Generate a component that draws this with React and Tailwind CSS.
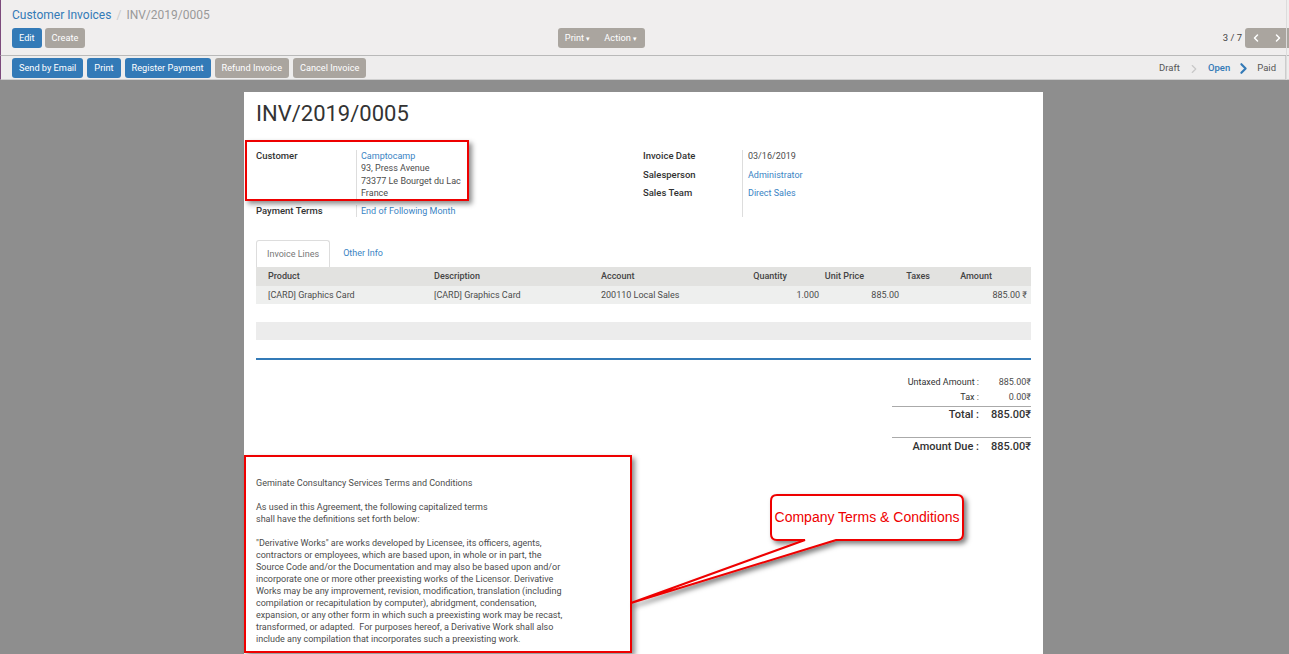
import { ChevronLeft, ChevronRight } from "lucide-react";

const blueBtn = "h-[20px] px-[7px] rounded-[3px] bg-[#337ab7] text-white text-[9.2px] leading-[20px]";
const grayBtn = "h-[20px] px-[7px] rounded-[3px] bg-[#aaa59f] text-white text-[9.2px] leading-[20px]";

function Field({ label, children }) {
  return (
    <div className="flex">
      <div className="w-[100px] shrink-0 font-medium text-[#333] text-[9.5px]">{label}</div>
      <div className="border-l border-[#ddd] pl-[4px] flex-1">{children}</div>
    </div>
  );
}

const lines = [
  { product: "[CARD] Graphics Card", desc: "[CARD] Graphics Card", account: "200110 Local Sales", qty: "1.000", price: "885.00", amount: "885.00 ₹" },
];

export default function App() {
  return (
    <div className="relative w-[1289px] h-[654px] overflow-hidden bg-[#8e8e8e] text-[#4c4c4c]" style={{ fontFamily: "Roboto, 'Noto Sans', sans-serif" }}>
      {/* control panel */}
      <div className="bg-[#f0eeee] border-l border-[#7c4a7c] border-b border-b-[#b9b9b9] h-[56px] pl-[11px] pt-[6px]">
        <div className="text-[12px] leading-[18px]">
          <span className="text-[#337ab7]">Customer Invoices</span>
          <span className="text-[#ccc] mx-[5px]">/</span>
          <span className="text-[#999]">INV/2019/0005</span>
        </div>
        <div className="flex mt-[4px]">
          <div className="w-[633px] flex justify-between">
            <div className="flex gap-[3px]">
              <button className={blueBtn}>Edit</button>
              <button className={grayBtn}>Create</button>
            </div>
            <div className="flex rounded-[3px] bg-[#aaa59f] h-[20px] text-white text-[9.2px] leading-[20px]">
              <span className="pl-[7px] pr-[6px]">Print <span className="text-[7px]">▾</span></span>
              <span className="pl-[8px] pr-[8px]">Action <span className="text-[7px]">▾</span></span>
            </div>
          </div>
          <div className="flex-1 flex justify-end items-center">
            <span className="text-[9.5px] mr-[3px] text-[#444]">3 / 7</span>
            <div className="flex h-[20px] w-[44px] rounded-l-[3px] bg-[#aaa59f] text-white items-center justify-around">
              <ChevronLeft size={12} strokeWidth={3} />
              <ChevronRight size={12} strokeWidth={3} />
            </div>
          </div>
        </div>
      </div>

      {/* status bar */}
      <div className="bg-[#eeeded] border-l border-[#7c4a7c] border-b border-b-[#d0d0d0] h-[24px] pl-[11px] flex items-center justify-between">
        <div className="flex gap-[4px]">
          <button className={blueBtn}>Send by Email</button>
          <button className={blueBtn}>Print</button>
          <button className={blueBtn}>Register Payment</button>
          <button className={grayBtn}>Refund Invoice</button>
          <button className={grayBtn}>Cancel Invoice</button>
        </div>
        <div className="flex items-center h-full text-[9.5px] border-r border-[#ccc] mr-[3px] pt-[2px]">
          <span className="text-[#555]">Draft</span>
          <ChevronRight size={14} strokeWidth={2} className="text-[#c8c8c8] mx-[7px]" />
          <span className="text-[#337ab7] font-medium">Open</span>
          <ChevronRight size={17} strokeWidth={3} className="text-[#337ab7] mx-[5px]" />
          <span className="text-[#555] mr-[9px]">Paid</span>
        </div>
      </div>

      {/* sheet */}
      <div className="pt-[12px] pr-[2px] flex justify-center">
        <div className="w-[799px] bg-white px-[12px] pt-[8px] text-[9px] leading-[12.3px] h-[600px]">
          <div className="text-[22px] leading-[28px] text-[#333] mb-[22px]">INV/2019/0005</div>
          <div className="flex">
            <div className="w-[387px] flex flex-col gap-[6px]">
              <Field label="Customer">
                <div className="text-[#3a84c4]">Camptocamp</div>
                <div>93, Press Avenue</div>
                <div>73377 Le Bourget du Lac</div>
                <div>France</div>
              </Field>
              <Field label="Payment Terms">
                <div className="text-[#3a84c4]">End of Following Month</div>
              </Field>
            </div>
            <div className="flex-1 flex">
              <div className="w-[99px] font-medium text-[9.5px] text-[#333] flex flex-col gap-[7px]">
                <div>Invoice Date</div>
                <div>Salesperson</div>
                <div className="-mt-[2px]">Sales Team</div>
              </div>
              <div className="border-l border-[#ddd] pl-[5px] flex flex-col gap-[7px] pb-[2px]">
                <div>03/16/2019</div>
                <div className="text-[#3a84c4]">Administrator</div>
                <div className="text-[#3a84c4] -mt-[2px]">Direct Sales</div>
              </div>
            </div>
          </div>

          {/* tabs */}
          <div className="mt-[23px] flex text-[9px]">
            <div className="border border-[#ddd] border-b-0 rounded-t-[3px] px-[10px] h-[27px] leading-[26px] text-[#777]">Invoice Lines</div>
            <div className="px-[13px] h-[27px] leading-[26px] text-[#3a84c4]">Other Info</div>
          </div>
          <div className="text-[9px]">
            <div className="grid grid-cols-[178px_167px_112px_74px_77px_66px_62px_39px] bg-[#e2e2e0] h-[19px] leading-[19px] font-medium text-[#444]">
              <div className="pl-[12px]">Product</div>
              <div>Description</div>
              <div>Account</div>
              <div className="text-right">Quantity</div>
              <div className="text-right">Unit Price</div>
              <div className="text-right">Taxes</div>
              <div className="text-right">Amount</div>
              <div></div>
            </div>
            {lines.map((l, i) => (
              <div key={i} className="grid grid-cols-[178px_167px_112px_106px_80px_132px] bg-[#eeefee] h-[18px] leading-[18px]">
                <div className="pl-[12px]">{l.product}</div>
                <div>{l.desc}</div>
                <div>{l.account}</div>
                <div className="text-right">{l.qty}</div>
                <div className="text-right">{l.price}</div>
                <div className="text-right pr-[4px]">{l.amount}</div>
              </div>
            ))}
            <div className="h-[18px]"></div>
            <div className="h-[18px] bg-[#ececec]"></div>
          </div>
          <div className="mt-[18px] h-[2px] bg-[#337ab7]"></div>

          {/* totals */}
          <div className="flex justify-end mt-[15px]">
            <div className="w-[139px] text-[9px]">
              <div className="flex justify-end h-[15px] leading-[15px]">
                <span className="text-[#333]">Untaxed Amount :</span>
                <span className="w-[52px] text-right">885.00₹</span>
              </div>
              <div className="flex justify-end h-[15px] leading-[15px]">
                <span className="text-[#333]">Tax :</span>
                <span className="w-[52px] text-right">0.00₹</span>
              </div>
              <div className="border-t border-[#aaa] mt-[1px] flex justify-end h-[16px] leading-[15px] text-[11px] font-medium text-[#333]">
                <span>Total :</span>
                <span className="w-[52px] text-right">885.00₹</span>
              </div>
              <div className="border-t border-[#aaa] mt-[15px] pt-[1px] flex justify-end h-[16px] leading-[15px] text-[11px] font-medium text-[#333]">
                <span>Amount Due :</span>
                <span className="w-[52px] text-right">885.00₹</span>
              </div>
            </div>
          </div>

          {/* terms */}
          <div className="mt-[24px] text-[9px] leading-[12px] text-[#4c4c4c] whitespace-nowrap">
            <p>Geminate Consultancy Services Terms and Conditions</p>
            <p className="mt-[12px]">As used in this Agreement, the following capitalized terms<br />shall have the definitions set forth below:</p>
            <p className="mt-[12px]">
              "Derivative Works" are works developed by Licensee, its officers, agents,<br />
              contractors or employees, which are based upon, in whole or in part, the<br />
              Source Code and/or the Documentation and may also be based upon and/or<br />
              incorporate one or more other preexisting works of the Licensor. Derivative<br />
              Works may be any improvement, revision, modification, translation (including<br />
              compilation or recapitulation by computer), abridgment, condensation,<br />
              expansion, or any other form in which such a preexisting work may be recast,<br />
              transformed, or adapted.&nbsp; For purposes hereof, a Derivative Work shall also<br />
              include any compilation that incorporates such a preexisting work.
            </p>
          </div>
        </div>
      </div>

      {/* right scrollbar line */}
      <div className="absolute top-[0px] right-[2px] w-[1px] h-[80px] bg-[#dcdcdc]"></div>

      {/* annotations */}
      <div className="absolute left-[245px] top-[140px] w-[224px] h-[61px] border-2 border-[#ee0000] shadow-[3px_3px_5px_rgba(0,0,0,0.45)]"></div>
      <div className="absolute left-[244px] top-[455px] w-[388px] h-[198px] border-2 border-[#ee0000] shadow-[3px_3px_5px_rgba(0,0,0,0.45)]"></div>
      <svg className="absolute left-0 top-0 pointer-events-none" width="1289" height="654">
        <defs>
          <filter id="sh" x="-10%" y="-10%" width="130%" height="140%">
            <feDropShadow dx="3" dy="3" stdDeviation="2.5" floodColor="#000" floodOpacity="0.5" />
          </filter>
        </defs>
        <path
          d="M777 495 H957 Q963 495 963 501 V534 Q963 540 957 540 H836 L631 603 L805 540 H777 Q771 540 771 534 V501 Q771 495 777 495 Z"
          fill="#fff"
          stroke="#ee0000"
          strokeWidth="2"
          filter="url(#sh)"
        />
      </svg>
      <div className="absolute left-[771px] top-[495px] w-[192px] h-[45px] flex items-center justify-center text-[14px] text-[#ee0000]" style={{ fontFamily: "'Liberation Sans', Arial, sans-serif" }}>
        Company Terms &amp; Conditions
      </div>
    </div>
  );
}
